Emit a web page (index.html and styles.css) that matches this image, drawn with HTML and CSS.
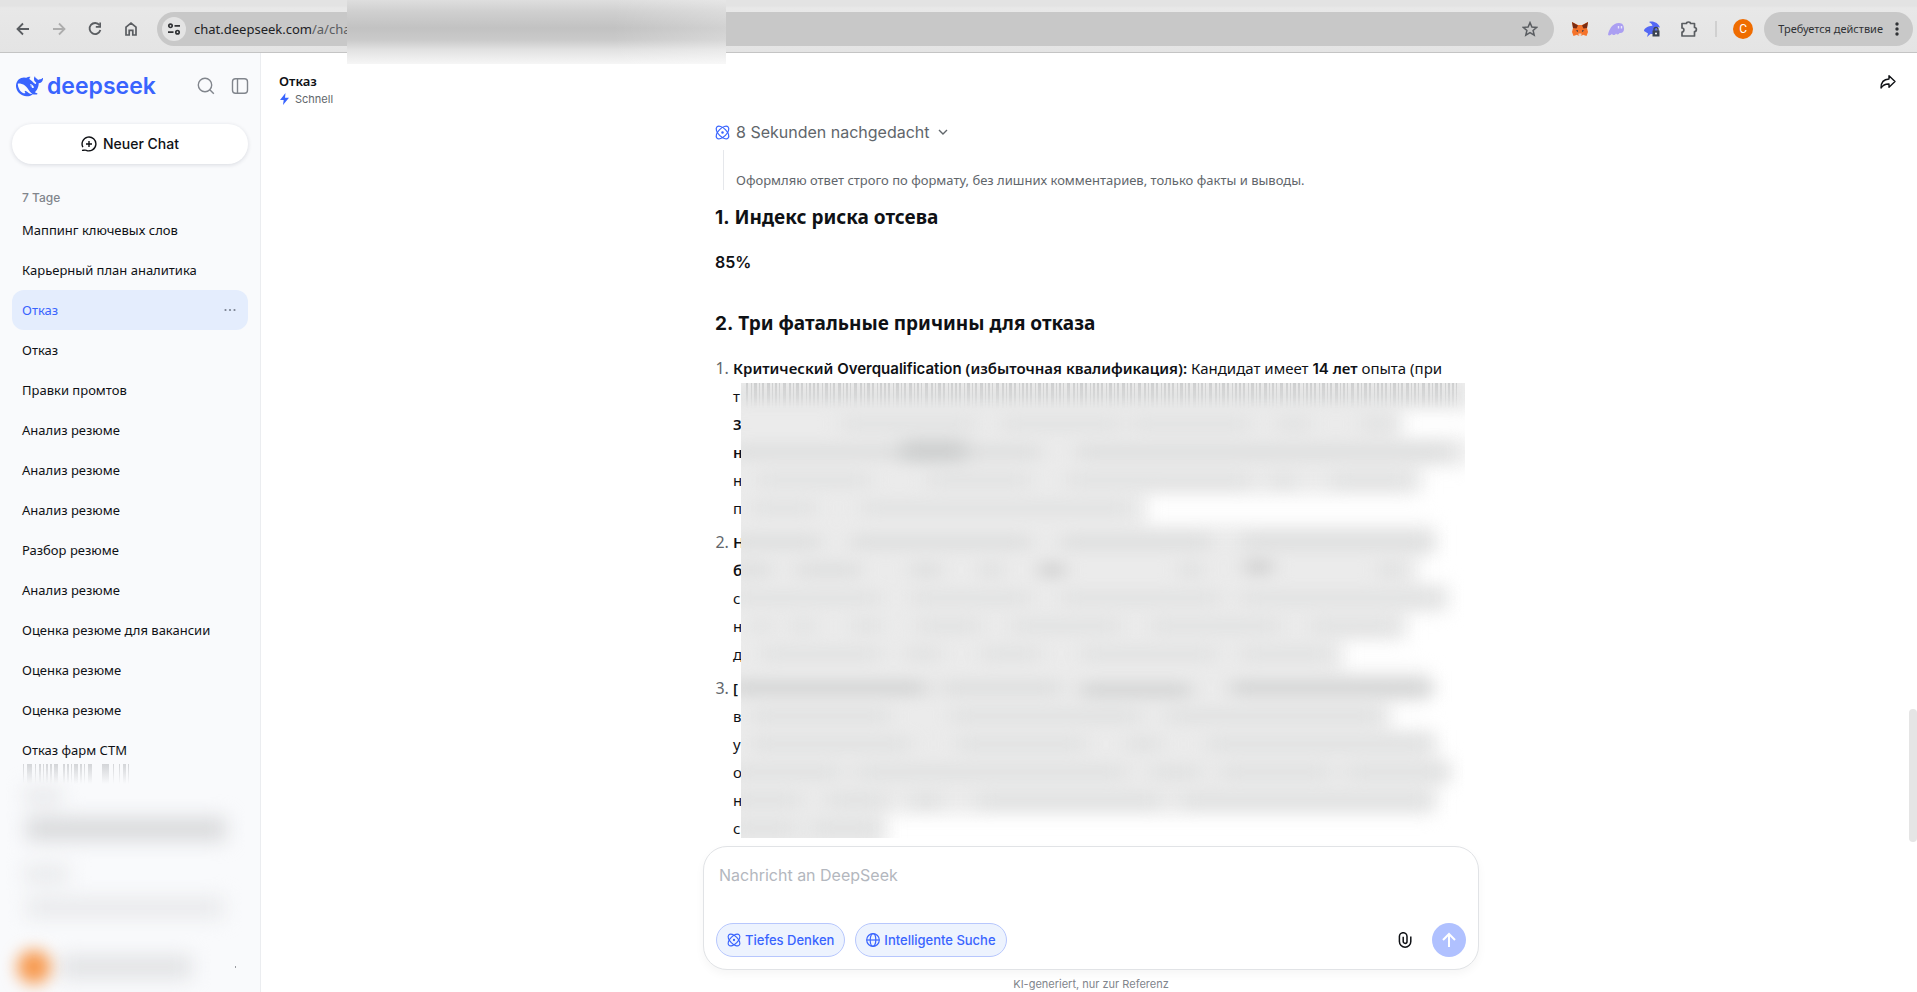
FILE: index.html
```html
<!DOCTYPE html>
<html lang="de">

<head>
  <meta charset="utf-8">
  <meta name="viewport" content="width=device-width, initial-scale=1">
  <title>Отказ - DeepSeek</title>
  <link rel="stylesheet" href="styles.css">
</head>

<body>

  <!-- shared icons -->
  <svg class="defs" width="0" height="0" aria-hidden="true">
    <symbol id="icon-atom" viewBox="0 0 16 16">
      <g fill="none" stroke="currentColor" stroke-width="1.3">
        <ellipse cx="8" cy="8" rx="8.4" ry="4.4" transform="rotate(45 8 8)" />
        <ellipse cx="8" cy="8" rx="8.4" ry="4.4" transform="rotate(-45 8 8)" />
      </g>
      <circle cx="8" cy="8" r="1.3" fill="currentColor" />
    </symbol>
  </svg>

  <header class="browser-bar">
    <nav class="browser-nav">
      <button class="nav-btn" aria-label="Назад">
        <svg width="16" height="16" viewBox="0 0 16 16"><path d="M14 8H3M8 2.500L2.500 8L8 13.500" fill="none" stroke="#5a5d61" stroke-width="1.800" /></svg>
      </button>
      <button class="nav-btn" aria-label="Вперёд">
        <svg width="16" height="16" viewBox="0 0 16 16"><path d="M2 8H13M8 2.500L13.500 8L8 13.500" fill="none" stroke="#adadad" stroke-width="1.800" /></svg>
      </button>
      <button class="nav-btn" aria-label="Обновить">
        <svg width="16" height="16" viewBox="0 0 16 16"><path d="M12.500 4.200A5.500 5.500 0 1 0 13.400 9" fill="none" stroke="#5a5d61" stroke-width="1.800" /><path d="M14 1.500V6.700H8.800V5H12.300V1.500Z" fill="#5a5d61" /></svg>
      </button>
      <button class="nav-btn" aria-label="Главная">
        <svg width="16" height="16" viewBox="0 0 16 16"><path d="M3 14V6.200L8 2.200L13 6.200V14H9.800V9.300H6.200V14Z" fill="none" stroke="#5a5d61" stroke-width="1.700" /></svg>
      </button>
    </nav>

    <div class="omnibox">
      <span class="site-info">
        <svg width="14" height="14" viewBox="0 0 14 14" fill="none" stroke="#303235" stroke-width="1.700"><circle cx="3.500" cy="3.800" r="1.700" /><path d="M7.500 3.800H13M1 10.200H6.500" /><circle cx="10.500" cy="10.200" r="1.700" /></svg>
      </span>
      <span class="url">chat.deepseek.com<span class="url-path">/a/chat</span></span>
      <button class="star" aria-label="Добавить в закладки">
        <svg width="16" height="16" viewBox="0 0 16 16"><path d="M8 1.600L9.900 6L14.700 6.400L11.100 9.500L12.200 14.200L8 11.700L3.800 14.200L4.900 9.500L1.300 6.400L6.100 6Z" fill="none" stroke="#5a5d61" stroke-width="1.500" /></svg>
      </button>
    </div>

    <div class="extensions">
      <svg width="16" height="16" viewBox="0 0 16 16">
        <path d="M0 1L6 4H10L16 1L15 7L16 11L14.500 15L11 13.800L9.500 15H6.500L5 13.800L1.500 15L0 11L1 7Z" fill="#f5732a" />
        <path d="M0 1L6 4.500L4.500 7.500L1 7ZM16 1L10 4.500L11.500 7.500L15 7Z" fill="#7a2c12" />
        <path d="M6.500 12.500H9.500V15H6.500Z" fill="#e8d5c8" />
        <path d="M3.700 9.500L6 9.300V11ZM12.300 9.500L10 9.300V11Z" fill="#3b3b4b" />
      </svg>
      <svg width="16" height="16" viewBox="0 0 16 16">
        <path d="M0 13.500C1 9 4 2 11 2C15 2 16 5 16 8C16 11 14 12.500 11.500 12C11 13.500 9 14 8 12.500C7 14.500 4.500 14.500 4 12.800C2.500 14.500 .500 15 0 13.500Z" fill="#ab9ff2" />
        <path d="M10.500 5V7.500M13.500 5V7.500" stroke="#e9e6fb" stroke-width="1.400" />
      </svg>
      <svg width="16" height="16" viewBox="0 0 16 16">
        <path d="M5 1C9-.500 14.500 2 16 6.500C14.500 6 13 5.800 11.500 6C13.500 8 14 11 11.500 13H6.500L3 16L4 12.500L0 10C0 7.500 4 5 8.500 4.800C8 3 6.500 2 5 1Z" fill="#5468f5" />
        <path d="M8.500 9.500H15.500V15.500H8.500Z" fill="#3c4450" />
        <path d="M10 10V8.500A2 2 0 0 1 14 8.500V10" fill="none" stroke="#3c4450" stroke-width="1.400" />
        <circle cx="12" cy="12.500" r="1" fill="#fff" />
      </svg>
      <svg width="18" height="18" viewBox="0 0 18 18"><path d="M2 3.500H6.500C6.500 1.500 10.500 1.500 10.500 3.500H14.500V7.500C17 7.500 17 11.500 14.500 11.500V16H2V12C4.500 12 4.500 8 2 8Z" fill="none" stroke="#5a5d61" stroke-width="1.700" stroke-linejoin="round" /></svg>
    </div>
    <span class="bar-sep"></span>
    <button class="profile" aria-label="Профиль">C</button>
    <button class="update-btn">Требуется действие
      <svg width="4" height="14" viewBox="0 0 4 14" fill="#303235"><circle cx="2" cy="2" r="1.700" /><circle cx="2" cy="7" r="1.700" /><circle cx="2" cy="12" r="1.700" /></svg>
    </button>
    <div class="url-mask"></div>
  </header>

  <div class="app">
    <aside class="sidebar">
      <div class="sidebar-top">
        <a class="logo" href="#">
          <svg width="27" height="27" viewBox="0 0 24 24" fill="currentColor"><path d="M23.748 4.482c-.254-.124-.364.113-.512.234-.051.039-.094.09-.137.136-.372.397-.806.657-1.373.626-.829-.046-1.537.214-2.163.848-.133-.782-.575-1.248-1.247-1.548-.352-.156-.708-.311-.955-.65-.172-.241-.219-.51-.305-.774-.055-.16-.11-.323-.293-.35-.2-.031-.278.136-.356.276-.313.572-.434 1.202-.422 1.84.027 1.436.633 2.58 1.838 3.393.137.093.172.187.129.323-.082.28-.18.552-.266.833-.055.179-.137.217-.329.14a5.526 5.526 0 01-1.736-1.18c-.857-.828-1.631-1.742-2.597-2.458a11.365 11.365 0 00-.689-.471c-.985-.957.13-1.743.388-1.836.27-.098.093-.432-.779-.428-.872.004-1.67.295-2.687.684a3.055 3.055 0 01-.465.137 9.597 9.597 0 00-2.883-.102c-1.885.21-3.39 1.102-4.497 2.623C.082 8.606-.231 10.684.152 12.85c.403 2.284 1.569 4.175 3.36 5.653 1.858 1.533 3.997 2.284 6.438 2.14 1.482-.085 3.133-.284 4.994-1.86.47.234.962.327 1.78.397.63.059 1.236-.03 1.705-.128.735-.156.684-.837.419-.961-2.155-1.004-1.682-.595-2.113-.926 1.096-1.296 2.746-2.642 3.392-7.003.05-.347.007-.565 0-.845-.004-.17.035-.237.23-.256a4.173 4.173 0 001.545-.475c1.396-.763 1.96-2.015 2.093-3.517.02-.23-.004-.467-.247-.588zM11.581 18c-2.089-1.642-3.102-2.183-3.52-2.16-.392.024-.321.471-.235.763.09.288.207.486.371.739.114.167.192.416-.113.603-.673.416-1.842-.14-1.897-.167-1.361-.802-2.5-1.86-3.301-3.307-.774-1.393-1.224-2.887-1.298-4.482-.02-.386.093-.522.477-.592a4.696 4.696 0 011.529-.039c2.132.312 3.946 1.265 5.468 2.774.868.86 1.525 1.887 2.202 2.891.72 1.066 1.494 2.082 2.48 2.914.348.292.625.514.891.677-.802.09-2.14.11-3.054-.614zm1-6.44a.306.306 0 01.415-.287.302.302 0 01.2.288.306.306 0 01-.31.307.303.303 0 01-.304-.308zm3.11 1.596c-.2.081-.399.151-.59.16a1.245 1.245 0 01-.798-.254c-.274-.23-.47-.358-.552-.758a1.73 1.73 0 01.016-.588c.07-.327-.008-.537-.239-.727-.187-.156-.426-.199-.688-.199a.559.559 0 01-.254-.078.253.253 0 01-.114-.358c.028-.054.16-.186.192-.21.356-.202.767-.136 1.146.016.352.144.618.408 1.001.782.391.451.462.576.685.914.176.265.336.537.445.848.067.195-.019.354-.25.452z" /></svg>
          <span>deepseek</span>
        </a>
        <button class="icon-btn" aria-label="Suchen">
          <svg width="18" height="18" viewBox="0 0 18 18" fill="none" stroke="#81858c" stroke-width="1.400"><circle cx="8" cy="8" r="6.700" /><path d="M12.800 12.800L16.800 16.800" /></svg>
        </button>
        <button class="icon-btn" aria-label="Seitenleiste schließen">
          <svg width="18" height="18" viewBox="0 0 18 18" fill="none" stroke="#81858c" stroke-width="1.400"><rect x="1.500" y="1.700" width="15" height="14.600" rx="3" /><path d="M6.500 2V16" /></svg>
        </button>
      </div>

      <button class="new-chat">
        <svg width="16" height="16" viewBox="0 0 16 16" fill="none" stroke="currentColor" stroke-width="1.400"><path d="M5.300 14.300A6.900 6.900 0 1 0 1.900 11.200M1 14.300C2.300 14.500 3.700 13.800 5.300 14.300C7 15.100 8.500 14.900 9.500 14.700M8 5V11M5 8H11" /></svg>
        Neuer Chat
      </button>

      <h2 class="group-title">7 Tage</h2>
      <ul class="history">
        <li><a href="#">Маппинг ключевых слов</a></li>
        <li><a href="#">Карьерный план аналитика</a></li>
        <li class="active"><a href="#">Отказ</a>
          <button class="more" aria-label="Mehr"><svg width="12" height="4" viewBox="0 0 12 4" fill="#7a8291"><circle cx="1.500" cy="2" r="1.100" /><circle cx="6" cy="2" r="1.100" /><circle cx="10.500" cy="2" r="1.100" /></svg></button>
        </li>
        <li><a href="#">Отказ</a></li>
        <li><a href="#">Правки промтов</a></li>
        <li><a href="#">Анализ резюме</a></li>
        <li><a href="#">Анализ резюме</a></li>
        <li><a href="#">Анализ резюме</a></li>
        <li><a href="#">Разбор резюме</a></li>
        <li><a href="#">Анализ резюме</a></li>
        <li><a href="#">Оценка резюме для вакансии</a></li>
        <li><a href="#">Оценка резюме</a></li>
        <li><a href="#">Оценка резюме</a></li>
        <li><a href="#">Отказ фарм СТМ</a></li>
      </ul>

      <svg class="sidebar-blur" width="260" height="222" viewBox="0 0 260 222" aria-hidden="true">
        <defs>
          <filter id="soft" x="-30%" y="-100%" width="160%" height="300%" color-interpolation-filters="sRGB"><feGaussianBlur stdDeviation="10" /></filter>
          <filter id="dot" x="-80%" y="-80%" width="260%" height="260%" color-interpolation-filters="sRGB"><feGaussianBlur stdDeviation="8" /></filter>
          <linearGradient id="fade" x1="0" y1="0" x2="0" y2="1"><stop offset="0" stop-color="#8d9095" stop-opacity=".35" /><stop offset="1" stop-color="#8d9095" stop-opacity="0" /></linearGradient>
        </defs>
        <path fill="url(#fade)" d="M23-6h1v20h-1zM27-6h5v20h-5zM35-6h1v20h-1zM39-6h2v20h-2zM43-6h1v20h-1zM46-6h2v20h-2zM50-6h2v20h-2zM54-6h4v20h-4zM63-6h2v20h-2zM67-6h2v20h-2zM71-6h1v20h-1zM74-6h4v20h-4zM80-6h2v20h-2zM84-6h1v20h-1zM88-6h4v20h-4zM102-6h7v20h-7zM113-6h1v20h-1zM119-6h1v20h-1zM123-6h3v20h-3zM128-6h1v20h-1z" />
        <g filter="url(#soft)">
          <rect x="24" y="18" width="38" height="16" fill="#e6e7e9" />
          <rect x="26" y="48" width="200" height="22" fill="#d6d7d9" />
          <rect x="24" y="96" width="44" height="16" fill="#e6e7e9" />
          <rect x="26" y="128" width="198" height="19" fill="#e7e8ea" />
          <rect x="60" y="186" width="132" height="22" fill="#e0e1e3" />
        </g>
        <circle cx="34" cy="197" r="17" fill="#f79a50" filter="url(#dot)" />
        <path d="M235 196h1v2h-1z" fill="#9a9ca0" />
      </svg>
    </aside>

    <main class="chat">
      <header class="chat-header">
        <div>
          <h1>Отказ</h1>
          <p class="mode"><svg width="11" height="12" viewBox="0 0 11 12"><path d="M6.500 0L1 7H4.700L4 12L10 4.800H6Z" fill="#3964fe" /></svg>Schnell</p>
        </div>
        <button class="icon-btn share" aria-label="Teilen">
          <svg width="16" height="16" viewBox="0 0 16 16"><path d="M9 1.800L15 7.500L9 13.200V10C5.500 9.800 3 11 1 14C1 8.500 4 5.200 9 5Z" fill="none" stroke="#0f1115" stroke-width="1.400" stroke-linejoin="round" /></svg>
        </button>
      </header>

      <div class="thread">
        <article class="column">
          <button class="thinking">
            <svg width="15" height="15"><use href="#icon-atom" /></svg>
            <span>8 Sekunden nachgedacht</span>
            <svg width="10" height="6" viewBox="0 0 10 6"><path d="M1 1L5 5L9 1" fill="none" stroke="#61666b" stroke-width="1.400" /></svg>
          </button>
          <blockquote>Оформляю ответ строго по формату, без лишних комментариев, только факты и выводы.</blockquote>

          <h3><span class="latin">1.</span> Индекс риска отсева</h3>
          <p class="score"><strong>85%</strong></p>
          <h3><span class="latin">2.</span> Три фатальные причины для отказа</h3>

          <div class="reasons">
            <ol>
              <li><strong>Критический <span class="latin">Overqualification</span> (избыточная квалификация):</strong> Кандидат имеет <strong><span class="latin">14</span> лет</strong> опыта (при<br>т<br><strong>3</strong><br><strong>н</strong><br>н<br>п</li>
              <li><strong>Н</strong><br><strong>б</strong><br>с<br>н<br>д</li>
              <li><strong>[</strong><br>в<br>у<br>о<br>н<br>с</li>
            </ol>

            <svg class="reasons-blur" viewBox="0 0 724 455" preserveAspectRatio="none" aria-hidden="true">
              <defs>
                <filter id="haze" x="-5%" y="-5%" width="110%" height="110%" color-interpolation-filters="sRGB"><feGaussianBlur stdDeviation="9" /></filter>
                <filter id="words" x="-5%" y="-5%" width="110%" height="110%" color-interpolation-filters="sRGB"><feGaussianBlur stdDeviation="10 7" /></filter>
                <linearGradient id="fall" x1="0" y1="0" x2="0" y2="1"><stop offset="0" stop-color="#8f9193" stop-opacity=".3" /><stop offset="1" stop-color="#8f9193" stop-opacity="0" /></linearGradient>
                <pattern id="bars" width="71" height="26" patternUnits="userSpaceOnUse">
                  <path fill="url(#fall)" d="M1 0h2v26h-2zM5 0h2v26h-2zM10 0h1v26h-1zM13 0h3v26h-3zM18 0h1v26h-1zM21 0h2v26h-2zM26 0h3v26h-3zM31 0h1v26h-1zM34 0h2v26h-2zM38 0h1v26h-1zM42 0h3v26h-3zM48 0h2v26h-2zM52 0h1v26h-1zM55 0h3v26h-3zM60 0h2v26h-2zM65 0h1v26h-1zM68 0h2v26h-2z" />
                </pattern>
              </defs>
              <path fill="#fff" d="M0 0H724V455H0Z" />
              <!-- ragged right edge follows the line ends -->
              <path filter="url(#haze)" fill="#ebebeb" d="M-30-30H735V27H660V55H728V83H681V111H406V142H694V173H677V201H707V229H666V257H602V288H689V319H649V347H694V375H709V403H694V431H145V485H-30Z" />
              <g filter="url(#words)" opacity=".8" fill="none" stroke="#dddede" stroke-width="17">
                <path d="M-10 13H720M100 41H235M260 41H380M390 41H510M535 41H570M620 41H655M15 97H130M185 97H290M325 97H510M530 97H555M590 97H670M10 125H75M120 125H390" stroke="#e1e2e2" />
                <path d="M-10 69H200M220 69H300M335 69H710M-10 159H80M110 159H290M320 159H470M500 159H690M-10 187H30M55 187H120M170 187H200M240 187H260M440 187H460M640 187H660" />
                <path d="M160 68H225" stroke="#c9cbcb" stroke-width="24" />
                <path d="M300 187H322M505 184H530" stroke="#cbcbcb" />
                <path d="M-10 215H140M170 215H290M320 215H480M500 215H700M10 243H30M50 243H75M110 243H140M175 243H240M270 243H380M410 243H540M570 243H655M20 271H140M165 271H200M240 271H300M340 271H475M500 271H590" stroke="#e1e2e2" />
                <path d="M-10 305H185M340 307H450M490 305H690" stroke="#d2d3d3" />
                <path d="M200 305H320" />
                <path d="M10 333H150M210 333H400M425 333H640M10 361H170M215 361H345M385 361H420M465 361H690M-10 389H100M115 389H385M410 389H460M480 389H590M605 389H705M-10 417H60M85 417H145M170 417H200M235 417H420M440 417H690M-10 445H55M70 445H138" stroke="#e0e1e1" />
              </g>
              <path fill="url(#bars)" d="M3 0H716V26H3Z" />
            </svg>
          </div>
        </article>
      </div>

      <form class="composer">
        <textarea rows="2" aria-label="Nachricht an DeepSeek" placeholder="Nachricht an DeepSeek"></textarea>
        <div class="composer-actions">
          <button type="button" class="chip"><svg width="14" height="14"><use href="#icon-atom" /></svg>Tiefes Denken</button>
          <button type="button" class="chip"><svg width="14" height="14" viewBox="0 0 14 14" fill="none" stroke="currentColor" stroke-width="1.200"><circle cx="7" cy="7" r="6.300" /><ellipse cx="7" cy="7" rx="2.800" ry="6.300" /><path d="M.700 7H13.300" /></svg>Intelligente Suche</button>
          <button type="button" class="attach" aria-label="Datei anhängen">
            <svg width="14" height="16" viewBox="0 0 14 16"><path d="M12.800 4.500V9.500A5.700 5.700 0 0 1 1.400 9.500V4.500A3.700 3.700 0 0 1 9 4.500V9.500A1.900 1.900 0 0 1 5.200 9.500V4.800" fill="none" stroke="#0f1115" stroke-width="1.500" /></svg>
          </button>
          <button type="submit" class="send" aria-label="Senden">
            <svg width="16" height="16" viewBox="0 0 16 16"><path d="M8 15V2M2 8L8 2L14 8" fill="none" stroke="#fff" stroke-width="2" /></svg>
          </button>
        </div>
      </form>
      <p class="disclaimer">KI-generiert, nur zur Referenz</p>
      <div class="scroll-thumb"></div>
    </main>
  </div>

</body>

</html>
```
FILE: styles.css
```css
* {
  box-sizing: border-box;
}

body {
  display: flex;
  flex-direction: column;
  height: 100vh;
  margin: 0;
  overflow: hidden;
  background: #fff;
  color: #0f1115;
  font: 14px/20px "Noto Sans", sans-serif;
}

h1, h2, h3, p, ul, ol, blockquote {
  margin: 0;
  padding: 0;
}

button {
  display: flex;
  align-items: center;
  justify-content: center;
  padding: 0;
  border: 0;
  background: none;
  color: inherit;
  font: inherit;
  cursor: pointer;
}

a {
  color: inherit;
  text-decoration: none;
}

svg {
  flex: none;
}

.defs {
  position: absolute;
}

.latin {
  font-family: Inter, sans-serif;
  line-height: 1;
}

/* browser toolbar */

.browser-bar {
  position: relative;
  z-index: 2;
  display: flex;
  align-items: center;
  flex: none;
  height: 53px;
  padding: 6px 4px 0 5px;
  border-bottom: 1px solid #c4c4c4;
  background: linear-gradient(#e3e3e3 6px, #e8e8e8 8px, #e4e4e4);
}

.browser-nav {
  display: flex;
}

.nav-btn {
  width: 36px;
  height: 34px;
}

.omnibox {
  display: flex;
  align-items: center;
  flex: 1;
  height: 34px;
  margin-left: 8px;
  padding: 0 16px 0 5px;
  border-radius: 17px;
  background: #c8c8c8;
}

.site-info {
  display: flex;
  align-items: center;
  justify-content: center;
  width: 24px;
  height: 24px;
  margin-right: 8px;
  border-radius: 50%;
  background: #e4e4e4;
}

.url {
  flex: 1;
  color: #202124;
  font-size: 13px;
}

.url-path {
  color: #5a5d61;
}

.extensions {
  display: flex;
  align-items: center;
  gap: 20px;
  margin-left: 18px;
}

.bar-sep {
  width: 2px;
  height: 16px;
  margin: 0 16px 0 17px;
  background: #d0d0d0;
}

.profile {
  width: 20px;
  height: 20px;
  border-radius: 50%;
  background: #ef6c00;
  color: #fff;
  font: 12px/20px Roboto, sans-serif;
}

.update-btn {
  gap: 12px;
  height: 34px;
  margin-left: 11px;
  padding: 0 14px;
  border-radius: 17px;
  background: #c8c8c8;
  color: #303235;
  font-size: 11px;
  white-space: nowrap;
}

.url-mask {
  position: absolute;
  top: 0;
  left: 347px;
  width: 379px;
  height: 64px;
  background:
    linear-gradient(90deg, transparent 70%, rgba(255, 255, 255, .25)),
    linear-gradient(#dedede, #cfcfcf 12px, #c2c2c2 28px, #cacaca 40px, #e2e2e2 50px, #f6f6f6);
}

/* sidebar */

.app {
  display: flex;
  flex: 1;
  min-height: 0;
}

.sidebar {
  flex: none;
  width: 261px;
  overflow: hidden;
  border-right: 1px solid #ebedf0;
  background: #f9fafc;
}

.sidebar-top {
  display: flex;
  align-items: center;
  gap: 16px;
  height: 66px;
  padding: 0 11px 0 16px;
}

.logo {
  display: flex;
  align-items: center;
  gap: 4px;
  flex: 1;
  color: #3964fe;
  font: 600 23px/28px Inter, sans-serif;
}

.icon-btn {
  width: 18px;
  height: 18px;
}

.new-chat {
  gap: 6px;
  width: 236px;
  height: 40px;
  margin: 5px 12px 0;
  border-radius: 20px;
  background: #fff;
  box-shadow: 0 1px 4px rgba(20, 30, 60, .14);
  font: 500 14px/20px Inter, sans-serif;
}

.group-title {
  margin: 24px 22px 2px;
  color: #81858c;
  font: 500 12px/20px Inter, sans-serif;
}

.history {
  padding: 0 12px;
  list-style: none;
}

.history li {
  display: flex;
  align-items: center;
  height: 40px;
  padding: 0 10px;
  border-radius: 12px;
  font-size: 13px;
}

.history a {
  flex: 1;
}

.history .active {
  background: #e4edfd;
  color: #3964fe;
}

.more {
  width: 16px;
  height: 16px;
}

.sidebar-blur {
  display: block;
  overflow: visible;
}

/* chat */

.chat {
  position: relative;
  display: flex;
  flex-direction: column;
  flex: 1;
  min-width: 0;
  padding-left: 4px;
}

.chat-header {
  display: flex;
  align-items: flex-start;
  justify-content: space-between;
  height: 64px;
  padding: 18px 20px 0 14px;
}

.chat-header h1 {
  font-size: 13px;
  font-weight: 600;
  line-height: 20px;
}

.mode {
  display: flex;
  align-items: center;
  gap: 5px;
  color: #61666b;
  font: 11px/16px Inter, sans-serif;
}

.share {
  height: 22px;
}

.thread {
  flex: 1;
  min-height: 0;
  overflow: hidden;
}

.column {
  width: 100%;
  max-width: 776px;
  margin: 0 auto;
  padding: 3px 12px 0;
}

.thinking {
  gap: 6px;
  color: #61666b;
  font: 16px/24px Inter, sans-serif;
}

.thinking svg:first-child {
  color: #3964fe;
}

.thinking svg:last-child {
  margin-left: 2px;
}

blockquote {
  margin: 6px 0 0 8px;
  padding: 20px 0 0 12px;
  border-left: 1px solid #e5e7eb;
  color: #61666b;
  font-size: 13px;
}

h3 {
  margin: 12px 0 16px;
  font-size: 19px;
  font-weight: 700;
  line-height: 30px;
}

.score {
  margin-bottom: 32px;
  font: 16px/28px Inter, sans-serif;
}

strong {
  font-weight: 600;
}

.reasons {
  position: relative;
}

.reasons ol {
  padding-left: 18px;
  font-size: 15px;
  line-height: 28px;
}

.reasons li {
  white-space: nowrap;
}

.reasons li + li {
  margin-top: 6px;
}

.reasons li::marker {
  color: #61666b;
  font-size: 16px;
}

.reasons-blur {
  position: absolute;
  top: 29px;
  left: 26px;
  width: 724px;
  height: 455px;
}

.composer {
  position: relative;
  width: 100%;
  max-width: 776px;
  margin: 0 auto;
  padding: 14px 12px 12px;
  border: 1px solid #e1e3e6;
  border-radius: 24px;
  background: #fff;
  box-shadow: 0 4px 10px rgba(0, 0, 0, .04);
}

.composer textarea {
  display: block;
  width: 100%;
  height: 62px;
  padding: 2px 3px;
  border: 0;
  outline: 0;
  resize: none;
  background: none;
  font: 16px/24px Inter, sans-serif;
}

.composer textarea::placeholder {
  color: #b3b7be;
}

.composer-actions {
  display: flex;
  align-items: center;
  gap: 10px;
}

.chip {
  gap: 4px;
  height: 34px;
  padding: 0 10px;
  border: 1px solid #b7c7fd;
  border-radius: 17px;
  background: #edf3fe;
  color: #3964fe;
  font: 500 13px/18px Inter, sans-serif;
}

.attach {
  width: 34px;
  height: 34px;
  margin-left: auto;
}

.send {
  width: 34px;
  height: 34px;
  border-radius: 50%;
  background: #b0c1ff;
}

.disclaimer {
  padding: 8px 0 2px;
  color: #81858c;
  font: 11px/12px Inter, sans-serif;
  text-align: center;
}

.scroll-thumb {
  position: absolute;
  right: 0;
  bottom: 150px;
  width: 8px;
  height: 133px;
  border-radius: 4px;
  background: #e5e5e5;
}
```
